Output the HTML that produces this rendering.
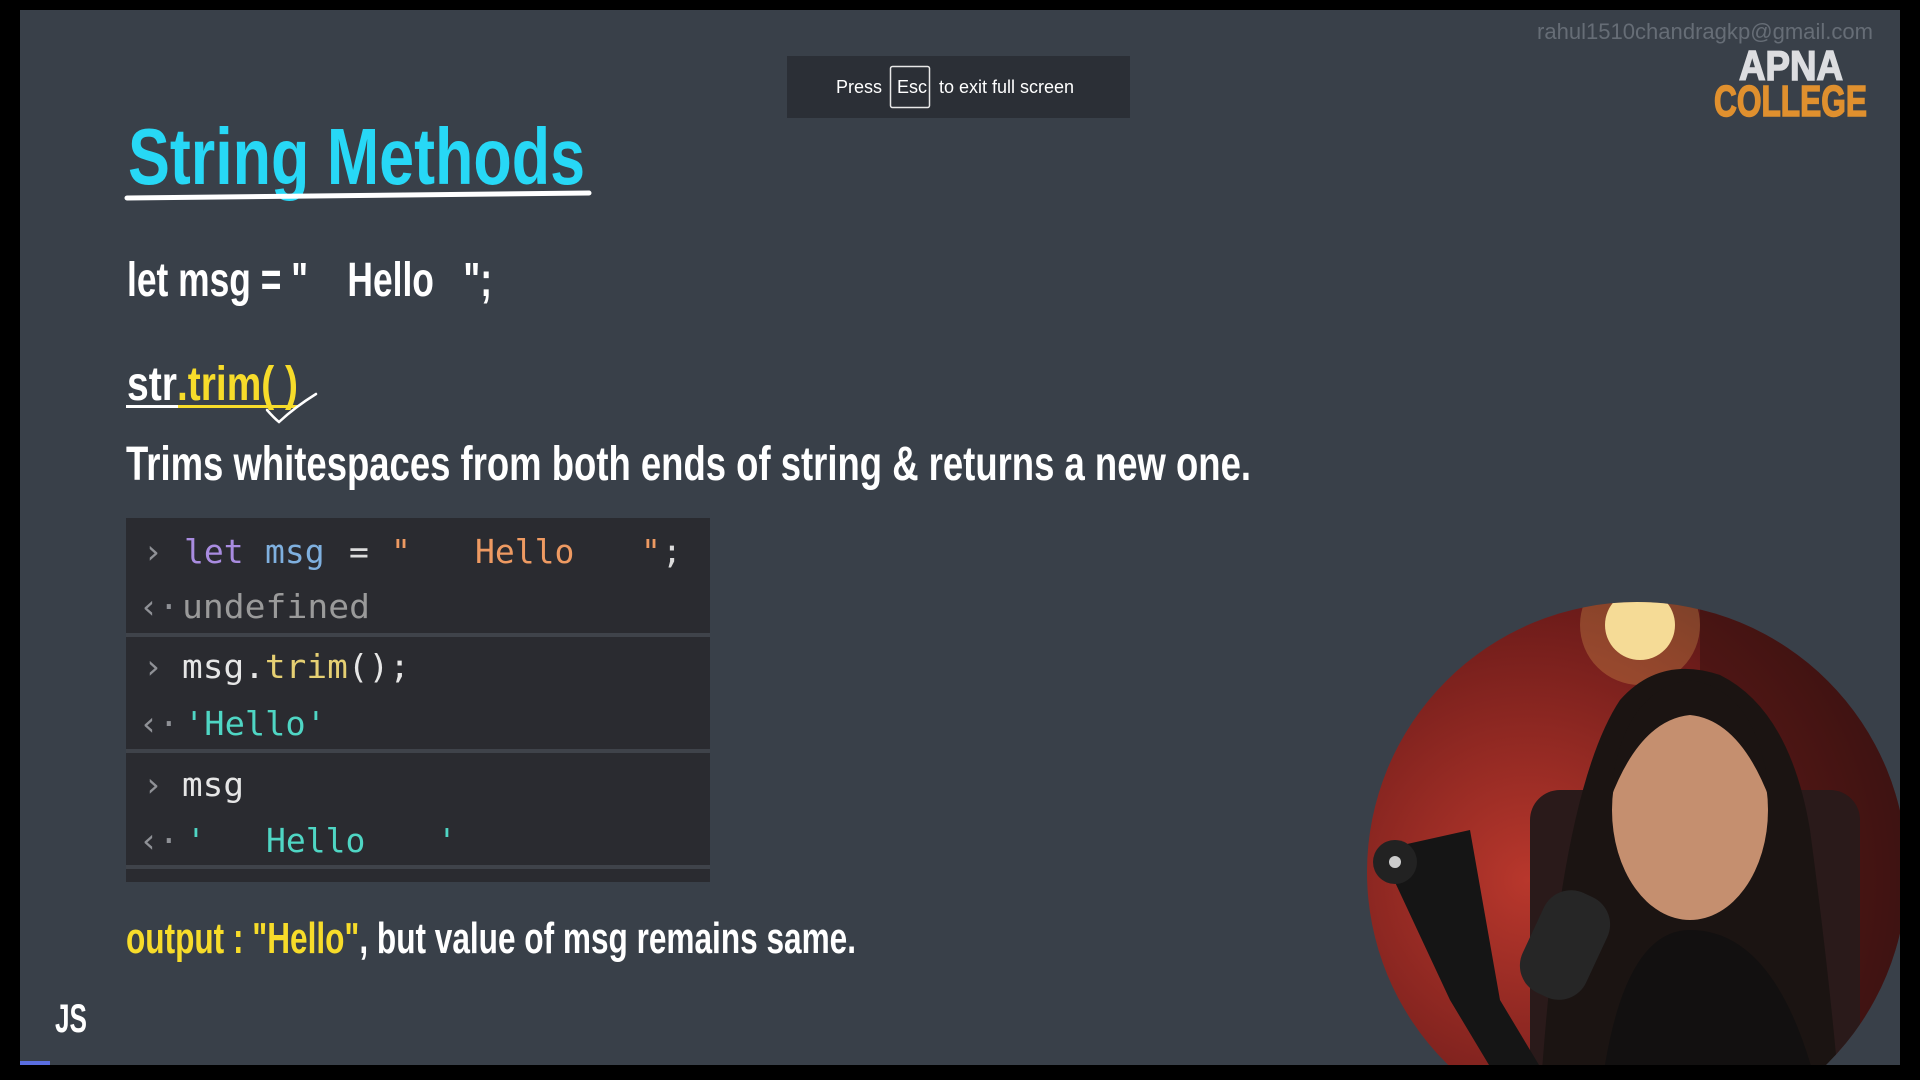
<!DOCTYPE html>
<html><head><meta charset="utf-8"><style>
html,body{margin:0;padding:0;width:1920px;height:1080px;overflow:hidden;background:#000}
#s{position:absolute;left:20px;top:10px;width:1880px;height:1055px;background:#394049;overflow:hidden}
svg{position:absolute;left:0;top:0;display:block}
</style></head><body>
<div id="s"></div>
<svg width="1920" height="1080" viewBox="0 0 1920 1080" xmlns="http://www.w3.org/2000/svg">
<defs>
<clipPath id="cc"><rect x="20" y="10" width="1880" height="1055"/></clipPath>
<radialGradient id="bg" cx="0.3" cy="0.5" r="0.8"><stop offset="0" stop-color="#b8372c"/><stop offset="0.6" stop-color="#6e1c1a"/><stop offset="1" stop-color="#2a0f10"/></radialGradient>
<clipPath id="circ"><circle cx="1637" cy="872" r="270"/></clipPath>
</defs>
<!-- Esc banner -->
<rect x="787" y="56" width="343" height="62" fill="#2b2f36"/>
<text x="836" y="93" font-family="Liberation Sans, sans-serif" font-size="18" fill="#fff">Press</text>
<rect x="890.5" y="66.5" width="39" height="41" fill="none" stroke="#e8e8e8" stroke-width="1.5" rx="2"/>
<text x="897" y="93" font-family="Liberation Sans, sans-serif" font-size="18" fill="#fff">Esc</text>
<text x="939" y="93" font-family="Liberation Sans, sans-serif" font-size="18" fill="#fff">to exit full screen</text>
<!-- email / logo -->
<text x="1537" y="39" font-family="Liberation Sans, sans-serif" font-size="22" fill="#666d76" textLength="336" lengthAdjust="spacingAndGlyphs">rahul1510chandragkp@gmail.com</text>
<text x="1739" y="80" font-family="Liberation Sans, sans-serif" font-weight="bold" font-size="42" fill="#dcdde0" stroke="#dcdde0" stroke-width="1.5" textLength="104" lengthAdjust="spacingAndGlyphs">APNA</text>
<text x="1714" y="116" font-family="Liberation Sans, sans-serif" font-weight="bold" font-size="44" fill="#e0902e" stroke="#e0902e" stroke-width="1.5" textLength="153" lengthAdjust="spacingAndGlyphs">COLLEGE</text>
<!-- title -->
<text x="128" y="184" font-family="Liberation Sans Narrow, Liberation Sans, sans-serif" font-weight="bold" font-size="80" fill="#27d8f6" textLength="457" lengthAdjust="spacingAndGlyphs">String Methods</text>
<path d="M127 198 Q350 195 589 193" stroke="#fff" stroke-width="5" stroke-linecap="round" fill="none"/>
<text x="127" y="296" font-family="Liberation Sans Narrow, Liberation Sans, sans-serif" font-weight="bold" font-size="48" fill="#fff" textLength="365" lengthAdjust="spacingAndGlyphs">let msg = "&#160;&#160;&#160; Hello &#160;&#160;";</text>
<text x="127" y="400" font-family="Liberation Sans Narrow, Liberation Sans, sans-serif" font-weight="bold" font-size="48" fill="#fff" textLength="50" lengthAdjust="spacingAndGlyphs">str</text>
<text x="177" y="400" font-family="Liberation Sans Narrow, Liberation Sans, sans-serif" font-weight="bold" font-size="48" fill="#f7dc2a" textLength="121" lengthAdjust="spacingAndGlyphs">.trim( )</text>
<rect x="126" y="405" width="52" height="3" fill="#fff"/>
<rect x="178" y="405" width="120" height="3" fill="#f7dc2a"/>
<path d="M267 410 Q274 418 279 422 Q295 407 316 394" stroke="#fff" stroke-width="2.5" fill="none" stroke-linecap="round"/>
<text x="126" y="480" font-family="Liberation Sans Narrow, Liberation Sans, sans-serif" font-weight="bold" font-size="48" fill="#fff" textLength="1125" lengthAdjust="spacingAndGlyphs">Trims whitespaces from both ends of string &amp; returns a new one.</text>
<!-- console -->
<rect x="126" y="518" width="584" height="364" fill="#2a2b30"/>
<rect x="126" y="633" width="584" height="4" fill="#3f434a"/>
<rect x="126" y="749" width="584" height="4" fill="#3f434a"/>
<rect x="126" y="865" width="584" height="4" fill="#3f434a"/>
<g font-family="DejaVu Sans Mono, Liberation Mono, monospace" font-size="33">
<text x="143" y="563" fill="#8f9196">›</text>
<text x="184" y="563"><tspan x="184" fill="#a98ce0">let</tspan><tspan x="265" fill="#7fb0df">msg</tspan><tspan x="349" fill="#dcdcdc">=</tspan><tspan x="391" fill="#ee9a62">"</tspan><tspan x="475" fill="#ee9a62">Hello</tspan><tspan x="641" fill="#ee9a62">"</tspan><tspan x="662" fill="#dcdcdc">;</tspan></text>
<text x="139" y="618" fill="#8f9196">‹·</text>
<text x="182" y="618" fill="#9a9a9a" textLength="188" lengthAdjust="spacingAndGlyphs">undefined</text>
<text x="143" y="678" fill="#8f9196">›</text>
<text x="182" y="678" textLength="228" lengthAdjust="spacingAndGlyphs"><tspan fill="#e6e6e6">msg.</tspan><tspan fill="#e6d073">trim</tspan><tspan fill="#e6e6e6">();</tspan></text>
<text x="139" y="735" fill="#8f9196">‹·</text>
<text x="184" y="735" fill="#4fd6c4" textLength="142" lengthAdjust="spacingAndGlyphs">'Hello'</text>
<text x="143" y="796" fill="#8f9196">›</text>
<text x="182" y="796" fill="#e6e6e6" textLength="62" lengthAdjust="spacingAndGlyphs">msg</text>
<text x="139" y="852" fill="#8f9196">‹·</text>
<text y="852" fill="#4fd6c4"><tspan x="186">'</tspan><tspan x="266">Hello</tspan><tspan x="437">'</tspan></text>
</g>
<!-- output line -->
<text x="126" y="953" font-family="Liberation Sans Narrow, Liberation Sans, sans-serif" font-weight="bold" font-size="44" textLength="730" lengthAdjust="spacingAndGlyphs"><tspan fill="#f7dc2a">output : "Hello"</tspan><tspan fill="#fff">, but value of msg remains same.</tspan></text>
<text x="55" y="1032" font-family="Liberation Sans Narrow, Liberation Sans, sans-serif" font-weight="bold" font-size="40" fill="#fff" textLength="32" lengthAdjust="spacingAndGlyphs">JS</text>
<!-- webcam -->
<g clip-path="url(#cc)"><g clip-path="url(#circ)">
<rect x="1360" y="600" width="560" height="560" fill="url(#bg)"/>
<rect x="1700" y="600" width="220" height="500" fill="#3a1210" opacity="0.6"/>
<circle cx="1640" cy="625" r="35" fill="#f7e4a8"/>
<circle cx="1640" cy="625" r="60" fill="#f0c060" opacity="0.25"/>
<rect x="1530" y="790" width="330" height="300" fill="#2a1a1a" rx="30"/>
<path d="M1540 1100 Q1560 790 1620 700 Q1660 655 1720 675 Q1790 710 1810 830 Q1830 980 1840 1100 Z" fill="#1b1412"/>
<ellipse cx="1690" cy="810" rx="78" ry="110" fill="#c58f6f"/>
<path d="M1610 800 Q1620 690 1690 680 Q1760 690 1770 800 Q1740 720 1690 715 Q1640 720 1610 800 Z" fill="#1b1412"/>
<path d="M1600 1100 Q1620 930 1690 930 Q1780 930 1820 1100 Z" fill="#121010"/>
<path d="M1380 850 L1470 830 L1500 1000 L1560 1100 L1510 1100 L1450 1000 Z" fill="#151515"/>
<circle cx="1395" cy="862" r="22" fill="#222"/>
<circle cx="1395" cy="862" r="6" fill="#ccc"/>
<rect x="1530" y="890" width="70" height="110" rx="30" fill="#262626" transform="rotate(25 1565 945)"/>
</g></g>
<rect x="20" y="1061" width="30" height="4" fill="#5a6ee0"/>
</svg>
</body></html>
